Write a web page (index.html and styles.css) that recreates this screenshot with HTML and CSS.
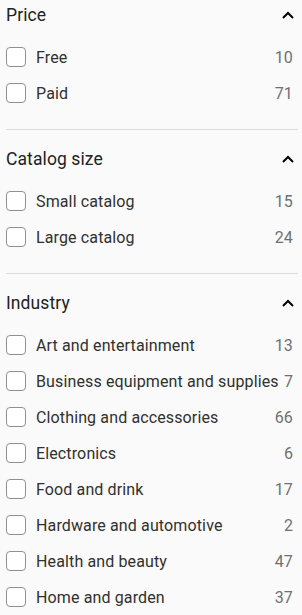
FILE: index.html
```html
<!DOCTYPE html>
<html lang="en">
<head>
<meta charset="utf-8">
<title>Filters</title>
<link rel="stylesheet" href="styles.css">
</head>
<body>
<div class="filters">
  <section class="section">
    <div class="head"><h2 class="title">Price</h2><svg class="chev" width="12" height="8" viewBox="0 0 12 8"><path d="M1 7 L6 2 L11 7" fill="none" stroke="#000" stroke-width="2"/></svg></div>
    <ul class="list">
      <li class="row"><span class="box"></span><span class="label">Free</span><span class="count">10</span></li>
      <li class="row"><span class="box"></span><span class="label">Paid</span><span class="count">71</span></li>
    </ul>
  </section>
  <section class="section">
    <div class="head"><h2 class="title">Catalog size</h2><svg class="chev" width="12" height="8" viewBox="0 0 12 8"><path d="M1 7 L6 2 L11 7" fill="none" stroke="#000" stroke-width="2"/></svg></div>
    <ul class="list">
      <li class="row"><span class="box"></span><span class="label">Small catalog</span><span class="count">15</span></li>
      <li class="row"><span class="box"></span><span class="label">Large catalog</span><span class="count">24</span></li>
    </ul>
  </section>
  <section class="section">
    <div class="head"><h2 class="title">Industry</h2><svg class="chev" width="12" height="8" viewBox="0 0 12 8"><path d="M1 7 L6 2 L11 7" fill="none" stroke="#000" stroke-width="2"/></svg></div>
    <ul class="list">
      <li class="row"><span class="box"></span><span class="label">Art and entertainment</span><span class="count">13</span></li>
      <li class="row"><span class="box"></span><span class="label">Business equipment and supplies</span><span class="count">7</span></li>
      <li class="row"><span class="box"></span><span class="label">Clothing and accessories</span><span class="count">66</span></li>
      <li class="row"><span class="box"></span><span class="label">Electronics</span><span class="count">6</span></li>
      <li class="row"><span class="box"></span><span class="label">Food and drink</span><span class="count">17</span></li>
      <li class="row"><span class="box"></span><span class="label">Hardware and automotive</span><span class="count">2</span></li>
      <li class="row"><span class="box"></span><span class="label">Health and beauty</span><span class="count">47</span></li>
      <li class="row"><span class="box"></span><span class="label">Home and garden</span><span class="count">37</span></li>
    </ul>
  </section>
</div>
</body>
</html>
```
FILE: styles.css
```css
html, body {
  margin: 0;
  padding: 0;
  background: #fafafa;
}
body {
  font-family: Roboto, "Liberation Sans", sans-serif;
  color: #202223;
  overflow: hidden;
}
.filters {
  padding: 0 4px 0 6px;
}
.section {
  padding: 14px 0 18px;
  border-bottom: 1px solid #dcdcdc;
}
.section:first-child {
  padding-top: 0;
}
.head {
  height: 30px;
  display: flex;
  align-items: center;
  justify-content: space-between;
  margin-bottom: 9px;
}
.title {
  margin: 0;
  font-size: 17.5px;
  font-weight: 400;
  letter-spacing: 0.1px;
  color: #202223;
}
.chev {
  margin-right: 4px;
  display: block;
}
.list {
  list-style: none;
  margin: 0;
  padding: 0;
}
.row {
  height: 36px;
  display: flex;
  align-items: center;
  font-size: 16px;
  letter-spacing: 0.13px;
}
.box {
  width: 18px;
  height: 18px;
  border: 1px solid #8c9196;
  border-radius: 4px;
  background: #fff;
  flex: none;
}
.label {
  margin-left: 10px;
  flex: 1;
  color: #303030;
  white-space: nowrap;
}
.count {
  color: #6d7175;
  margin-right: 5px;
}
```
